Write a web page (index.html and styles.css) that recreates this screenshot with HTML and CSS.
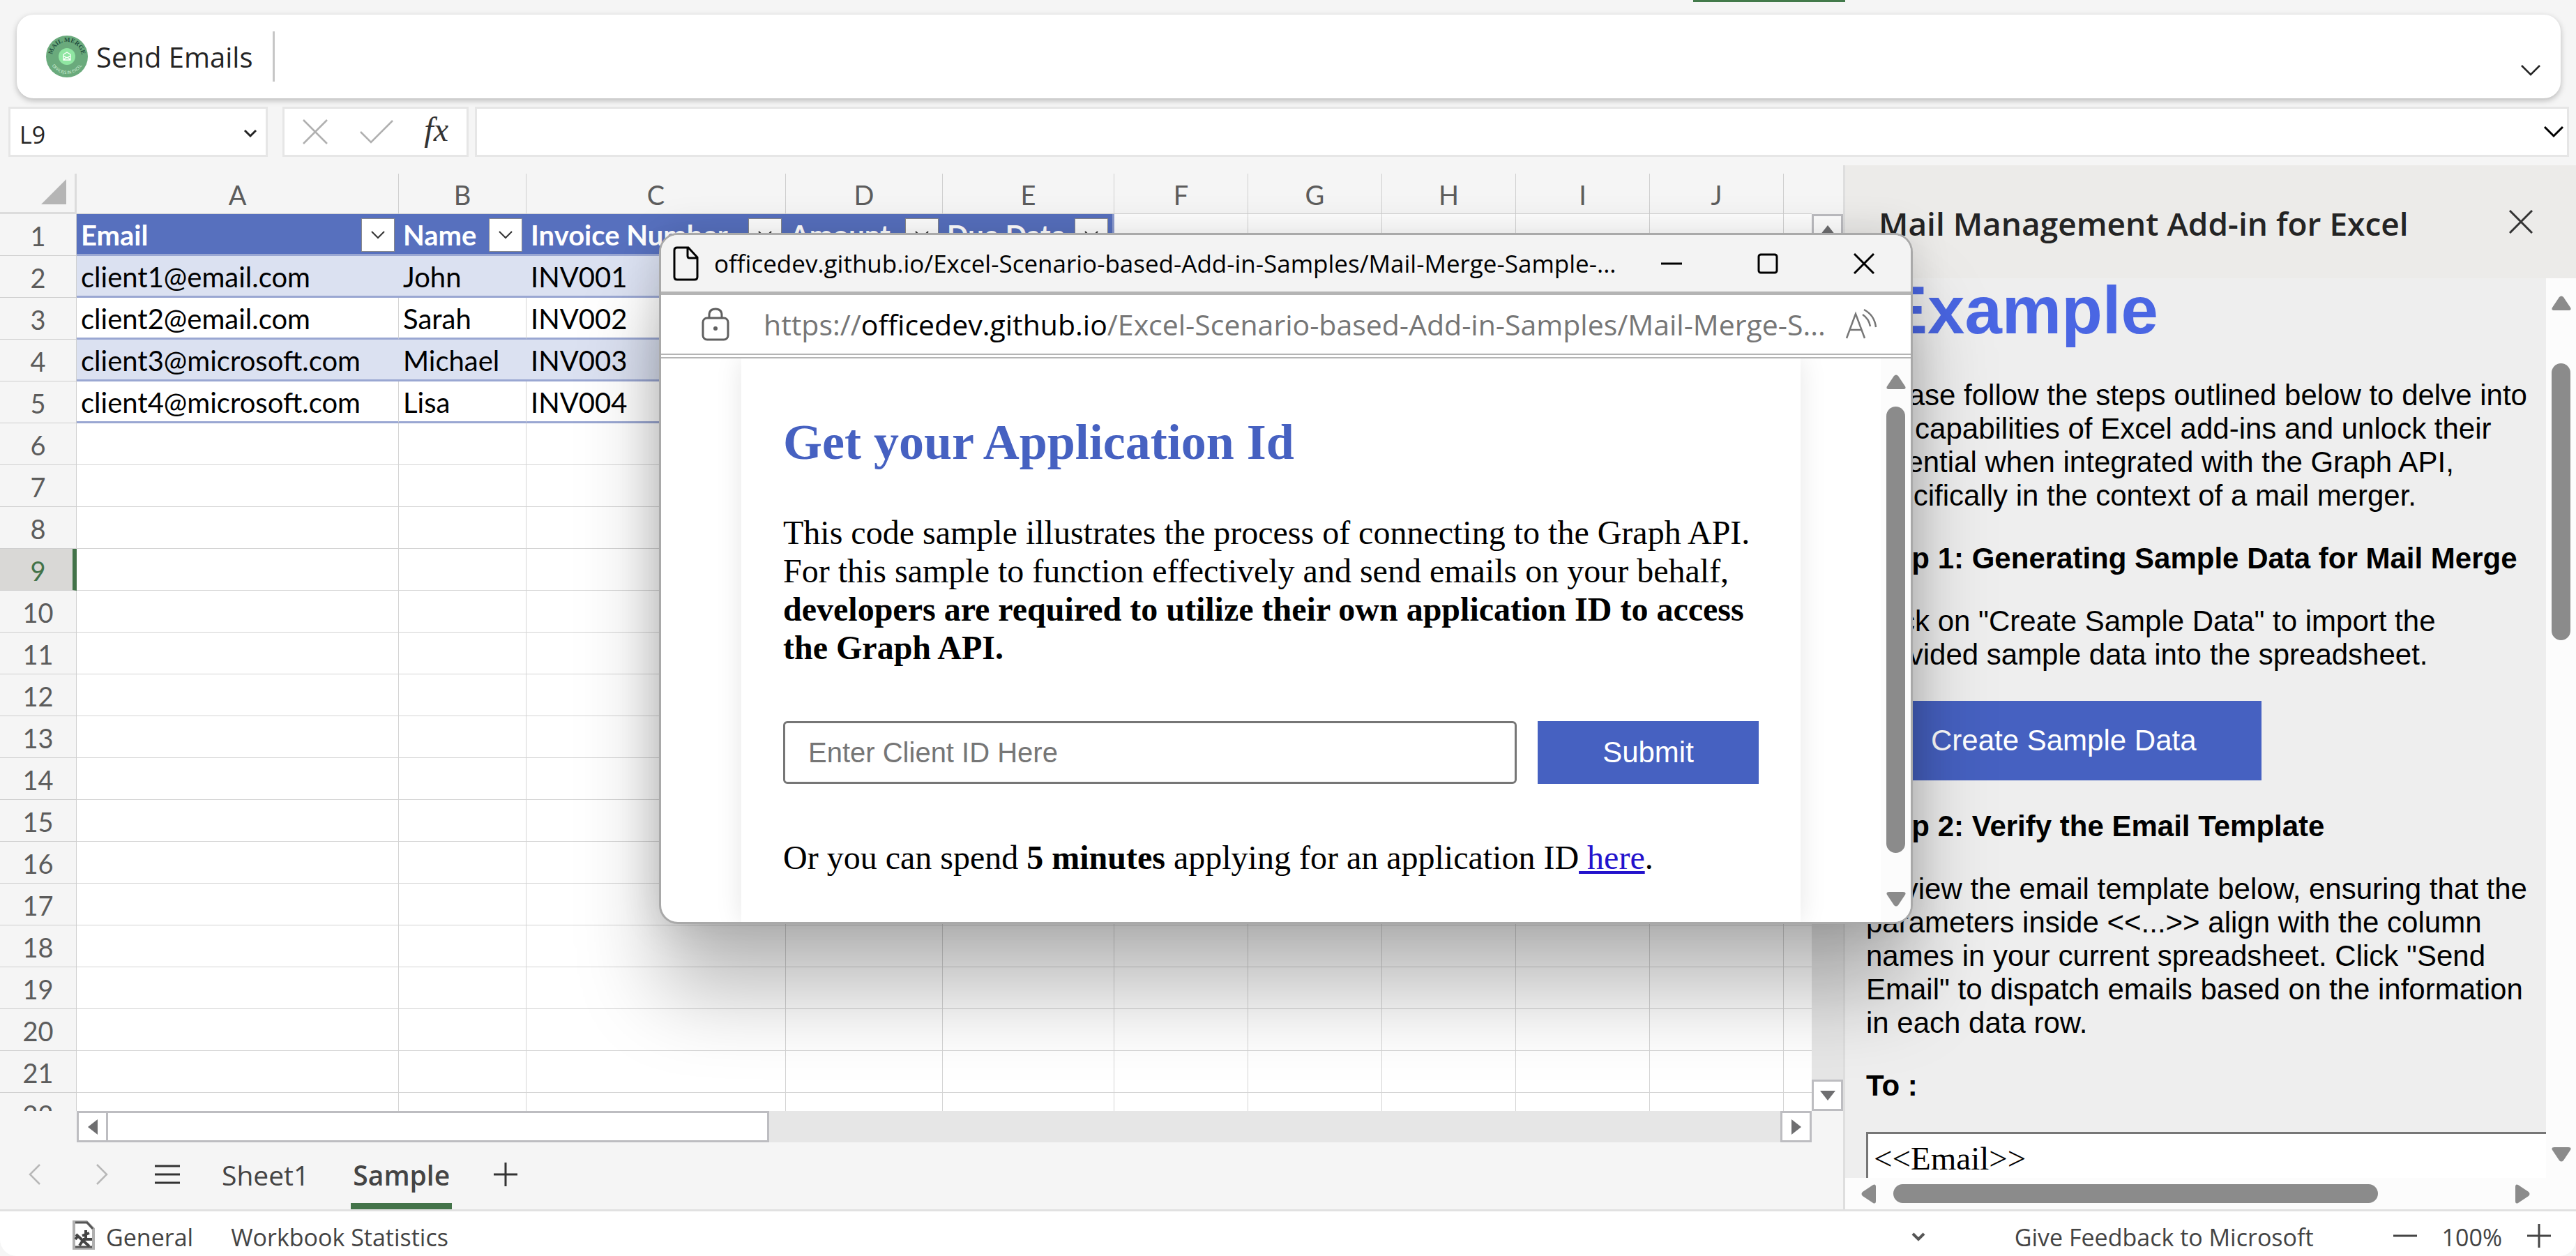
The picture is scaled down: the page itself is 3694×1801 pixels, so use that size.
FILE: index.html
```html
<!DOCTYPE html>
<html lang="en">
<head>
<meta charset="utf-8">
<title>Mail Merge Sample - Excel</title>
<link rel="stylesheet" href="styles.css">
</head>
<body>
<div class="app">
  <div class="active-tab-marker"></div>

  <header class="ribbon">
    <button class="send-emails" type="button">
      <svg class="logo" viewBox="0 0 60 60" aria-hidden="true">
        <defs>
          <path id="arc-top" d="M9 30a21 21 0 0 1 42 0"/>
          <path id="arc-bottom" d="M5 30a25 25 0 0 0 50 0"/>
        </defs>
        <circle cx="30" cy="30" r="30" fill="#6aaa7c"/>
        <circle cx="30" cy="30" r="12" fill="#90e6a2"/>
        <path d="M25 29v-2l5-3 5 3v2m-10 0v6h10v-6l-5 3zm0 6 4-4m6 4-4-4" fill="none" stroke="#fff" stroke-width="1.3"/>
        <text class="logo-top"><textPath href="#arc-top" startOffset="50%" text-anchor="middle">MAIL MERGE</textPath></text>
        <text class="logo-bottom"><textPath href="#arc-bottom" startOffset="50%" text-anchor="middle">OFFICEJS IN EXCEL</textPath></text>
      </svg>
      <span>Send Emails</span>
    </button>
    <span class="ribbon-divider"></span>
    <button class="ribbon-toggle" type="button" aria-label="Ribbon display options">
      <svg width="32" height="20" viewBox="0 0 32 20"><path d="M3 3l13 13L29 3" fill="none" stroke="#242424" stroke-width="2.5"/></svg>
    </button>
  </header>

  <div class="formula-row">
    <div class="name-box">
      <input type="text" value="L9" aria-label="Name box">
      <button type="button" aria-label="Show names">
        <svg width="20" height="14" viewBox="0 0 20 14"><path d="M2 2l8 8 8-8" fill="none" stroke="#242424" stroke-width="3"/></svg>
      </button>
    </div>
    <div class="formula-tools">
      <button type="button" aria-label="Cancel"><svg width="40" height="40" viewBox="0 0 40 40"><path d="M3 3l34 34M37 3L3 37" stroke="#b0b0b0" stroke-width="2.5"/></svg></button>
      <button type="button" aria-label="Enter"><svg width="50" height="40" viewBox="0 0 50 40"><path d="M2 20l15 15L48 4" fill="none" stroke="#b0b0b0" stroke-width="2.5"/></svg></button>
      <button class="fx" type="button">fx</button>
    </div>
    <div class="formula-bar">
      <input type="text" aria-label="Formula bar">
      <button type="button" aria-label="Expand formula bar"><svg width="32" height="20" viewBox="0 0 32 20"><path d="M3 3l13 13L29 3" fill="none" stroke="#000" stroke-width="3"/></svg></button>
    </div>
  </div>

  <div class="main">
    <section class="workbook">
      <div class="sheet">
        <table class="grid">
          <colgroup><col class="c-row"><col class="c-a"><col class="c-b"><col class="c-c"><col class="c-d"><col class="c-e"><col class="c-std"><col class="c-std"><col class="c-std"><col class="c-std"><col class="c-std"><col></colgroup>
          <thead>
            <tr><th class="corner"><svg width="36" height="36" viewBox="0 0 36 36"><path d="M36 0v36H0z" fill="#b5b5b5"/></svg></th><th>A</th><th>B</th><th>C</th><th>D</th><th>E</th><th>F</th><th>G</th><th>H</th><th>I</th><th>J</th><th></th></tr>
          </thead>
          <tbody>
            <tr class="table-head"><th>1</th>
              <td><div>Email<button type="button" aria-label="Filter Email"><svg width="20" height="12" viewBox="0 0 20 12"><path d="M1 1l9 9 9-9"/></svg></button></div></td>
              <td><div>Name<button type="button" aria-label="Filter Name"><svg width="20" height="12" viewBox="0 0 20 12"><path d="M1 1l9 9 9-9"/></svg></button></div></td>
              <td><div>Invoice Number<button type="button" aria-label="Filter Invoice Number"><svg width="20" height="12" viewBox="0 0 20 12"><path d="M1 1l9 9 9-9"/></svg></button></div></td>
              <td><div>Amount<button type="button" aria-label="Filter Amount"><svg width="20" height="12" viewBox="0 0 20 12"><path d="M1 1l9 9 9-9"/></svg></button></div></td>
              <td><div>Due Date<button type="button" aria-label="Filter Due Date"><svg width="20" height="12" viewBox="0 0 20 12"><path d="M1 1l9 9 9-9"/></svg></button></div></td>
              <td></td><td></td><td></td><td></td><td></td><td></td></tr>
            <tr class="record band"><th>2</th><td>client1@email.com</td><td>John</td><td>INV001</td><td></td><td></td><td></td><td></td><td></td><td></td><td></td><td></td></tr>
            <tr class="record"><th>3</th><td>client2@email.com</td><td>Sarah</td><td>INV002</td><td></td><td></td><td></td><td></td><td></td><td></td><td></td><td></td></tr>
            <tr class="record band"><th>4</th><td>client3@microsoft.com</td><td>Michael</td><td>INV003</td><td></td><td></td><td></td><td></td><td></td><td></td><td></td><td></td></tr>
            <tr class="record"><th>5</th><td>client4@microsoft.com</td><td>Lisa</td><td>INV004</td><td></td><td></td><td></td><td></td><td></td><td></td><td></td><td></td></tr>
            <tr><th>6</th><td></td><td></td><td></td><td></td><td></td><td></td><td></td><td></td><td></td><td></td><td></td></tr>
            <tr><th>7</th><td></td><td></td><td></td><td></td><td></td><td></td><td></td><td></td><td></td><td></td><td></td></tr>
            <tr><th>8</th><td></td><td></td><td></td><td></td><td></td><td></td><td></td><td></td><td></td><td></td><td></td></tr>
            <tr class="selected"><th>9</th><td></td><td></td><td></td><td></td><td></td><td></td><td></td><td></td><td></td><td></td><td></td></tr>
            <tr><th>10</th><td></td><td></td><td></td><td></td><td></td><td></td><td></td><td></td><td></td><td></td><td></td></tr>
            <tr><th>11</th><td></td><td></td><td></td><td></td><td></td><td></td><td></td><td></td><td></td><td></td><td></td></tr>
            <tr><th>12</th><td></td><td></td><td></td><td></td><td></td><td></td><td></td><td></td><td></td><td></td><td></td></tr>
            <tr><th>13</th><td></td><td></td><td></td><td></td><td></td><td></td><td></td><td></td><td></td><td></td><td></td></tr>
            <tr><th>14</th><td></td><td></td><td></td><td></td><td></td><td></td><td></td><td></td><td></td><td></td><td></td></tr>
            <tr><th>15</th><td></td><td></td><td></td><td></td><td></td><td></td><td></td><td></td><td></td><td></td><td></td></tr>
            <tr><th>16</th><td></td><td></td><td></td><td></td><td></td><td></td><td></td><td></td><td></td><td></td><td></td></tr>
            <tr><th>17</th><td></td><td></td><td></td><td></td><td></td><td></td><td></td><td></td><td></td><td></td><td></td></tr>
            <tr><th>18</th><td></td><td></td><td></td><td></td><td></td><td></td><td></td><td></td><td></td><td></td><td></td></tr>
            <tr><th>19</th><td></td><td></td><td></td><td></td><td></td><td></td><td></td><td></td><td></td><td></td><td></td></tr>
            <tr><th>20</th><td></td><td></td><td></td><td></td><td></td><td></td><td></td><td></td><td></td><td></td><td></td></tr>
            <tr><th>21</th><td></td><td></td><td></td><td></td><td></td><td></td><td></td><td></td><td></td><td></td><td></td></tr>
            <tr><th>22</th><td></td><td></td><td></td><td></td><td></td><td></td><td></td><td></td><td></td><td></td><td></td></tr>
          </tbody>
        </table>
      </div>
      <div class="vscroll">
        <span class="scroll-btn"><svg width="22" height="14" viewBox="0 0 22 14"><path d="M11 0l11 14H0z"/></svg></span>
        <span class="scroll-btn"><svg width="22" height="14" viewBox="0 0 22 14"><path d="M11 14L0 0h22z"/></svg></span>
      </div>
      <div class="hscroll">
        <span class="scroll-btn"><svg width="14" height="22" viewBox="0 0 14 22"><path d="M0 11L14 0v22z"/></svg></span>
        <span class="hthumb"></span>
        <span class="scroll-btn last"><svg width="14" height="22" viewBox="0 0 14 22"><path d="M14 11L0 0v22z"/></svg></span>
      </div>
      <nav class="sheet-tabs">
        <button type="button" aria-label="Previous sheet"><svg width="36" height="32" viewBox="0 0 36 32"><path d="M27 2L13 16l14 14" fill="none" stroke="#b8b8b8" stroke-width="2.5"/></svg></button>
        <button type="button" aria-label="Next sheet"><svg width="36" height="32" viewBox="0 0 36 32"><path d="M13 2l14 14-14 14" fill="none" stroke="#b8b8b8" stroke-width="2.5"/></svg></button>
        <button type="button" aria-label="All sheets"><svg width="36" height="32" viewBox="0 0 36 32"><path d="M0 4h36M0 16h36M0 28h36" stroke="#333" stroke-width="3"/></svg></button>
        <button class="tab" type="button">Sheet1</button>
        <button class="tab current" type="button">Sample</button>
        <button type="button" aria-label="New sheet"><svg width="34" height="34" viewBox="0 0 34 34"><path d="M0 17h34M17 0v34" stroke="#333" stroke-width="3"/></svg></button>
      </nav>
    </section>

    <aside class="pane">
      <div class="pane-head">
        <h2>Mail Management Add-in for Excel</h2>
        <button type="button" aria-label="Close pane"><svg width="34" height="34" viewBox="0 0 34 34"><path d="M1 1l32 32M33 1L1 33" stroke="#333" stroke-width="3"/></svg></button>
      </div>
      <div class="pane-body">
        <h1>Example</h1>
        <p>Please follow the steps outlined below to delve into the capabilities of Excel add-ins and unlock their potential when integrated with the Graph API, specifically in the context of a mail merger.</p>
        <h3>Step 1: Generating Sample Data for Mail Merge</h3>
        <p>Click on "Create Sample Data" to import the provided sample data into the spreadsheet.</p>
        <button class="primary create" type="button">Create Sample Data</button>
        <h3>Step 2: Verify the Email Template</h3>
        <p>Review the email template below, ensuring that the parameters inside &lt;&lt;...&gt;&gt; align with the column names in your current spreadsheet. Click "Send Email" to dispatch emails based on the information in each data row.</p>
        <label for="to">To :</label>
        <input id="to" type="text" value="&lt;&lt;Email&gt;&gt;">
      </div>
      <div class="pane-vscroll">
        <svg width="28" height="22" viewBox="0 0 28 22"><path d="M11 2q3-3 6 0l10 15q2 4-3 4H4q-5 0-3-4z" fill="#8b8b8b"/></svg>
        <span class="pane-vthumb"></span>
        <svg class="end" width="28" height="22" viewBox="0 0 28 22"><path d="M11 20q3 3 6 0L27 5q2-4-3-4H4Q-1 1 1 5z" fill="#8b8b8b"/></svg>
      </div>
      <div class="pane-hscroll">
        <svg width="22" height="28" viewBox="0 0 22 28"><path d="M2 11q-3 3 0 6l15 10q4 2 4-3V4q0-5-4-3z" fill="#8b8b8b"/></svg>
        <span class="pane-hthumb"></span>
        <svg class="end" width="22" height="28" viewBox="0 0 22 28"><path d="M20 11q3 3 0 6L5 27q-4 2-4-3V4q0-5 4-3z" fill="#8b8b8b"/></svg>
      </div>
    </aside>
  </div>

  <footer class="status">
    <button class="general" type="button">
      <svg width="32" height="42" viewBox="0 0 32 42"><path d="M2 2h18l10 10v28H2z" fill="#fff" stroke="#b0b0b0" stroke-width="4"/><path d="M4 3h17l8 9M4 38h24" fill="none" stroke="#555" stroke-width="3"/><path d="M5 20l19 17M4 27l5-6M15 27h13M19 14v14M14 22l10-4M10 36l4-6" fill="none" stroke="#444" stroke-width="4"/></svg>
      <span>General</span>
    </button>
    <button type="button">Workbook Statistics</button>
    <button class="status-more" type="button" aria-label="More"><svg width="20" height="14" viewBox="0 0 20 14"><path d="M2 2l8 8 8-8" fill="none" stroke="#555" stroke-width="4"/></svg></button>
    <button class="feedback" type="button">Give Feedback to Microsoft</button>
    <div class="zoom">
      <button type="button" aria-label="Zoom out"><svg width="34" height="34" viewBox="0 0 34 34"><path d="M0 17h34" stroke="#444" stroke-width="3"/></svg></button>
      <button class="zoom-level" type="button">100%</button>
      <button type="button" aria-label="Zoom in"><svg width="34" height="34" viewBox="0 0 34 34"><path d="M0 17h34M17 0v34" stroke="#444" stroke-width="3"/></svg></button>
    </div>
  </footer>
</div>

<div class="dialog" role="dialog" aria-label="Application Id">
  <div class="titlebar">
    <svg width="38" height="50" viewBox="0 0 38 50"><path d="M6 2h16l13 14v28q0 4-4 4H6q-4 0-4-4V6q0-4 4-4zM21 2v12q0 3 3 3h11" fill="none" stroke="#000" stroke-width="3"/></svg>
    <span class="window-title">officedev.github.io/Excel-Scenario-based-Add-in-Samples/Mail-Merge-Sample-...</span>
    <div class="window-buttons">
      <button type="button" aria-label="Minimize"><svg width="30" height="30" viewBox="0 0 30 30"><path d="M0 15h30" stroke="#000" stroke-width="3"/></svg></button>
      <button type="button" aria-label="Maximize"><svg width="30" height="30" viewBox="0 0 30 30"><rect x="2" y="2" width="26" height="26" rx="3" fill="none" stroke="#000" stroke-width="3"/></svg></button>
      <button type="button" aria-label="Close"><svg width="30" height="30" viewBox="0 0 30 30"><path d="M1 1l28 28M29 1L1 29" stroke="#000" stroke-width="3"/></svg></button>
    </div>
  </div>
  <div class="address">
    <svg width="40" height="48" viewBox="0 0 40 48"><rect x="2" y="15" width="36" height="31" rx="6" fill="none" stroke="#5f5f5f" stroke-width="3"/><path d="M11 15v-4q0-9 9-9t9 9v4" fill="none" stroke="#5f5f5f" stroke-width="3"/><circle cx="20" cy="30" r="3" fill="#5f5f5f"/></svg>
    <span class="url">https://<b>officedev.github.io</b>/Excel-Scenario-based-Add-in-Samples/Mail-Merge-S...</span>
    <svg class="read" width="46" height="46" viewBox="0 0 46 46"><path d="M2 43L15 8l13 35M7 31h17M25 9q9 6 11 17M27 2q15 8 17 25" fill="none" stroke="#767676" stroke-width="2.5"/></svg>
  </div>
  <div class="dialog-view">
    <div class="card">
      <h1>Get your Application Id</h1>
      <p>This code sample illustrates the process of connecting to the Graph API. For this sample to function effectively and send emails on your behalf, <strong>developers are required to utilize their own application ID to access the Graph API.</strong></p>
      <form class="client-form">
        <input type="text" placeholder="Enter Client ID Here" aria-label="Client ID">
        <button class="primary" type="button">Submit</button>
      </form>
      <p>Or you can spend <strong>5 minutes</strong> applying for an application ID<a href="#"> here</a>.</p>
    </div>
    <div class="dialog-scroll">
      <svg width="28" height="22" viewBox="0 0 28 22"><path d="M11 2q3-3 6 0l10 15q2 4-3 4H4q-5 0-3-4z" fill="#8b8b8b"/></svg>
      <span class="dialog-thumb"></span>
      <svg width="28" height="22" viewBox="0 0 28 22"><path d="M11 20q3 3 6 0L27 5q2-4-3-4H4Q-1 1 1 5z" fill="#8b8b8b"/></svg>
    </div>
  </div>
</div>
</body>
</html>
```
FILE: styles.css
```css
* { box-sizing: border-box; }
body { margin: 0; font-family: "Open Sans", "Noto Sans", sans-serif; color: #242424; background: #f5f5f5; }
button { border: 0; padding: 0; margin: 0; background: none; font: inherit; color: inherit; }
input { font: inherit; color: inherit; border: 0; padding: 0; background: none; min-width: 0; }
h1, h2, h3, p { margin: 0; }
svg { display: block; flex: none; }

.app { display: flex; flex-direction: column; height: 100vh; position: relative; overflow: hidden; }
.active-tab-marker { position: absolute; top: 0; right: 1048px; width: 218px; height: 3px; background: #437a4b; }

/* Ribbon */
.ribbon { display: flex; align-items: center; flex: none; height: 120px; margin: 21px 22px 12px 24px; padding: 0 27px 0 42px; border-radius: 24px; background: #fff; box-shadow: 0 3px 9px rgba(0, 0, 0, .25); }
.send-emails { display: flex; align-items: center; gap: 12px; height: 60px; font-size: 40px; }
.logo { width: 60px; height: 60px; }
.logo-top { font: 700 9px "Liberation Serif", serif; fill: #1e4a3c; }
.logo-bottom { font: 6px "Open Sans", sans-serif; fill: #d9f5df; }
.ribbon-divider { width: 3px; height: 72px; margin-left: 28px; background: #c6c6c6; }
.ribbon-toggle { margin: 40px 0 0 auto; }

/* Formula row */
.formula-row { display: flex; flex: none; height: 72px; margin: 0 10px 12px 12px; }
.formula-row > div { display: flex; align-items: center; border: 3px solid #e6e6e6; background: #fff; }
.name-box { width: 372px; margin-right: 21px; padding: 0 12px 0 13px; font-size: 34px; }
.name-box input { flex: 1; padding-top: 8px; }
.name-box button { padding-top: 6px; }
.formula-tools { justify-content: space-between; width: 267px; margin-right: 9px; padding: 0 26px 0 24px; }
.fx { padding-bottom: 6px; font: italic 48px/48px "Liberation Serif", serif; color: #333; }
.formula-bar { flex: 1; }
.formula-bar input { flex: 1; }
.formula-bar button { margin-right: 3px; }

/* Workbook */
.main { display: flex; flex: 1; min-height: 0; }
.workbook { flex: 1; min-width: 0; display: grid; grid-template-columns: minmax(0, 1fr) 45px; grid-template-rows: minmax(0, 1fr) 45px 96px; padding-top: 12px; }
.sheet { overflow: hidden; }
.grid { width: 100%; table-layout: fixed; border-collapse: separate; border-spacing: 0; font: 40px/44px Lato, sans-serif; color: #000; }
.c-row { width: 110px; }
.c-a { width: 462px; }
.c-b { width: 183px; }
.c-c { width: 372px; }
.c-d { width: 225px; }
.c-e { width: 246px; }
.c-std { width: 192px; }
.grid th { height: 60px; padding: 2px 0 0; border-right: 1px solid #cfcfcf; border-bottom: 1px solid #cfcfcf; background: #f5f5f5; font-size: 38px; font-weight: 400; color: #5c5c5c; }
.grid thead th { height: 58px; padding-top: 2px; }
.grid th.corner { border-right: 3px solid #dcdcdc; border-bottom: 3px solid #dcdcdc; padding: 0 12px 4px 0; }
.corner svg { margin-left: auto; }
.grid td { height: 60px; padding: 3px 6px 0; border-right: 1px solid #d4d4d4; border-bottom: 1px solid #d4d4d4; background: #fff; white-space: nowrap; }
.grid tr > :last-child { border-right: 0; }
.table-head td:nth-child(-n+6) { background: #5770be; border-right: 0; border-bottom: 3px solid #9aa7d2; font-weight: 700; color: #fff; }
.table-head td:nth-child(6) { border-right: 3px solid #8e9dd0; }
.table-head div { display: flex; align-items: center; }
.table-head button { display: grid; place-items: center; flex: none; width: 48px; height: 48px; margin-left: auto; border: 1px solid #8a8a8a; background: #fff; }
.table-head path { fill: none; stroke: #333; stroke-width: 2; }
.record td:nth-child(-n+6) { border-bottom: 3px solid #9aa7d2; }
.record.band td:nth-child(-n+6) { background: #dbe1f1; border-right: 0; }
.grid .selected th { border-right: 6px solid #437349; padding-left: 5px; background: #d9d8d6; color: #437349; }

.scroll-btn { display: grid; place-items: center; width: 45px; height: 45px; border: 3px solid #bdbdc1; background: #fff; }
.scroll-btn path { fill: #6e6e70; }
.vscroll { display: flex; flex-direction: column; justify-content: space-between; margin-top: 58px; background: #e6e6e6; }
.hscroll { display: flex; grid-column: 1; margin-left: 110px; background: #e6e6e6; }
.hthumb { width: 41%; max-width: 948px; height: 45px; border: 3px solid #bdbdc1; border-left: 0; background: #fff; }
.hscroll .last { margin-left: auto; }
.sheet-tabs { grid-column: 1 / -1; display: flex; align-items: center; gap: 60px; padding: 0 0 4px 30px; font-size: 39px; color: #444; }
.tab { height: 92px; }
.tab.current { height: 96px; margin-bottom: -4px; border-bottom: 9px solid #437349; padding: 5px 3px 0; font-weight: 600; }

/* Task pane */
.pane { display: grid; flex: none; grid-template-columns: minmax(0, 1fr) 43px; grid-template-rows: 162px minmax(0, 1fr) 45px; width: 1051px; border-left: 3px solid #dedede; }
.pane-head { grid-column: 1 / -1; display: flex; align-items: center; justify-content: space-between; padding: 0 62px 0 48px; background: #ecebe9; }
.pane-head h2 { padding-top: 3px; font-size: 46px; font-weight: 600; line-height: 60px; }
.pane-body { display: flex; flex-direction: column; align-items: flex-start; gap: 42px; overflow: hidden; padding: 0 20px 0 30px; background: #eee; font: 42px/48px "Liberation Sans", sans-serif; color: #000; }
.pane-body > * { flex: none; }
.pane-body h1 { padding: 0 24px 10px; font-size: 96px; line-height: 92px; color: #4a66e3; }
.pane-body p { max-width: 956px; }
.pane-body h3, .pane-body label { font-size: 42px; font-weight: 700; }
.primary { background: #4661c1; color: #fff; font: 42px/48px "Liberation Sans", sans-serif; }
.create { height: 114px; padding: 0 93px; }
.pane-body #to { width: 1200px; height: 110px; padding: 0 8px 34px; border: 3px solid #767676; background: #fff; font: 47px/54px "Liberation Serif", serif; }
.pane-vscroll { display: flex; flex-direction: column; align-items: center; padding: 25px 0 23px; background: #fcfcfc; }
.pane-vthumb { width: 27px; height: 397px; margin-top: 75px; border-radius: 14px; background: #8b8b8b; }
.pane-vscroll .end { margin-top: auto; }
.pane-hscroll { grid-column: 1 / -1; display: flex; align-items: center; padding: 0 66px 0 23px; background: #fcfcfc; }
.pane-hthumb { width: 695px; height: 27px; margin-left: 24px; border-radius: 14px; background: #8b8b8b; }
.pane-hscroll .end { margin-left: auto; }

/* Status bar */
.status { display: flex; align-items: center; flex: none; height: 67px; padding: 6px 36px 0 104px; border-top: 3px solid #e1e1e1; border-radius: 0 0 24px 24px; background: #fff; font-size: 34px; line-height: 48px; color: #444; }
.status > button, .zoom-level { padding-top: 4px; }
.general { display: flex; align-items: center; gap: 16px; margin-right: 54px; }
.general svg { margin-top: -6px; }
.status-more { margin-left: auto; }
.feedback { margin: 0 114px 0 128px; }
.zoom { display: flex; align-items: center; gap: 36px; }

/* Add-in dialog window */
.dialog { position: absolute; left: 948px; top: 337px; display: flex; flex-direction: column; width: 1792px; height: 985px; overflow: hidden; border-radius: 24px; background: #fff; box-shadow: 0 0 0 3px #a9a9a9, 0 0 60px rgba(0, 0, 0, .16), 0 100px 120px rgba(0, 0, 0, .27); }
.titlebar { display: flex; align-items: center; flex: none; height: 86px; padding: 0 52px 0 17px; border-bottom: 5px solid #b4b4b4; background: #f3f3f3; color: #000; font-size: 35px; line-height: 48px; }
.window-title { margin-left: 21px; white-space: nowrap; }
.window-buttons { display: flex; gap: 108px; margin-left: auto; }
.address { display: flex; align-items: center; flex: none; height: 91px; padding: 0 48px 0 58px; border-bottom: 7px double #b4b4b4; font-size: 41px; line-height: 54px; color: #767676; }
.url { flex: none; margin-left: 49px; white-space: nowrap; }
.url b { font-weight: 400; color: #000; }
.read { margin-left: auto; }
.dialog-view { display: flex; flex: 1; min-height: 0; overflow: hidden; }
.card { flex: 1; margin: 0 115px; padding: 79px 60px 0; box-shadow: 0 0 36px rgba(0, 0, 0, .1); font: 48px/55px "Liberation Serif", serif; color: #000; }
.card h1 { margin-bottom: 61px; font-size: 72px; line-height: 82px; color: #4661c1; }
.client-form { display: flex; gap: 30px; margin: 78px 0; }
.client-form input { flex: 1; height: 90px; padding: 0 33px; border: 3px solid #767676; border-radius: 6px; font: 40px/48px "Liberation Sans", sans-serif; }
.client-form input::placeholder { color: #767676; }
.client-form button { width: 317px; height: 90px; }
.card a { color: #2312cc; }
.dialog-scroll { display: flex; flex-direction: column; align-items: center; flex: none; width: 43px; padding: 23px 0 22px; background: #fcfcfc; }
.dialog-thumb { width: 27px; height: 640px; margin: 24px 0 auto; border-radius: 14px; background: #8b8b8b; }
```
